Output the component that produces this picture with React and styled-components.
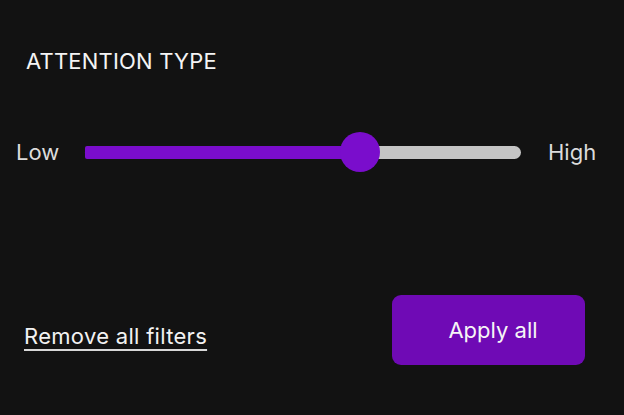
import React, { useState } from 'react';
import styled, { createGlobalStyle } from 'styled-components';

const GlobalStyle = createGlobalStyle`
  html, body {
    margin: 0;
    padding: 0;
    background: #121212;
  }
  * {
    box-sizing: border-box;
  }
`;

const App = () => {
  const [value] = useState(63);

  return (
    <Page>
      <GlobalStyle />
      <Title>ATTENTION TYPE</Title>
      <SliderRow>
        <RangeLabel>Low</RangeLabel>
        <Track>
          <Fill style={{ width: `${value}%` }} />
          <Thumb style={{ left: `${value}%` }} />
        </Track>
        <RangeLabel>High</RangeLabel>
      </SliderRow>
      <Footer>
        <RemoveLink>Remove all filters</RemoveLink>
        <ApplyButton>Apply all</ApplyButton>
      </Footer>
    </Page>
  );
};

export default App;

const Page = styled.div`
  width: 624px;
  height: 415px;
  background: #121212;
  padding: 48px 29px 0 16px;
  display: flex;
  flex-direction: column;
  font-family: Inter, 'Noto Sans', sans-serif;
  overflow: hidden;
`;

const Title = styled.div`
  margin-left: 10px;
  color: #f4f4f4;
  font-size: 22px;
  font-weight: 400;
  line-height: 27px;
  letter-spacing: 0.2px;
`;

const SliderRow = styled.div`
  display: flex;
  flex-direction: row;
  align-items: center;
  height: 40px;
  margin-top: 57px;
`;

const RangeLabel = styled.div`
  flex-shrink: 0;
  color: #dcdcdc;
  font-size: 22px;
  line-height: 27px;
  width: 47px;
  &:first-child {
    width: 69px;
  }
  &:last-child {
    margin-left: 27px;
  }
`;

const Track = styled.div`
  position: relative;
  flex-shrink: 0;
  width: 436px;
  height: 13px;
  border-radius: 7px;
  background: #c5c5c5;
`;

const Fill = styled.div`
  height: 100%;
  border-radius: 2px 0 0 2px;
  background: #7a0dcc;
`;

const Thumb = styled.div`
  position: absolute;
  top: 50%;
  width: 40px;
  height: 40px;
  border-radius: 50%;
  background: #7a0dcc;
  transform: translate(-50%, -50%);
`;

const Footer = styled.div`
  display: flex;
  flex-direction: row;
  justify-content: space-between;
  align-items: center;
  margin-top: 123px;
  margin-right: 10px;
  padding-left: 8px;
`;

const RemoveLink = styled.a`
  margin-top: 13px;
  color: #f2f2f2;
  font-size: 22px;
  line-height: 27px;
  letter-spacing: 0.3px;
  text-decoration: underline;
  text-decoration-thickness: 2px;
  text-underline-offset: 5px;
  text-decoration-color: #d8d8d8;
  cursor: pointer;
`;

const ApplyButton = styled.button`
  width: 193px;
  height: 70px;
  border: none;
  border-radius: 9px;
  background: #6f0ab5;
  color: #f6f6f6;
  font-family: Inter, 'Noto Sans', sans-serif;
  font-size: 22px;
  padding: 0 0 0 9px;
  cursor: pointer;
`;
